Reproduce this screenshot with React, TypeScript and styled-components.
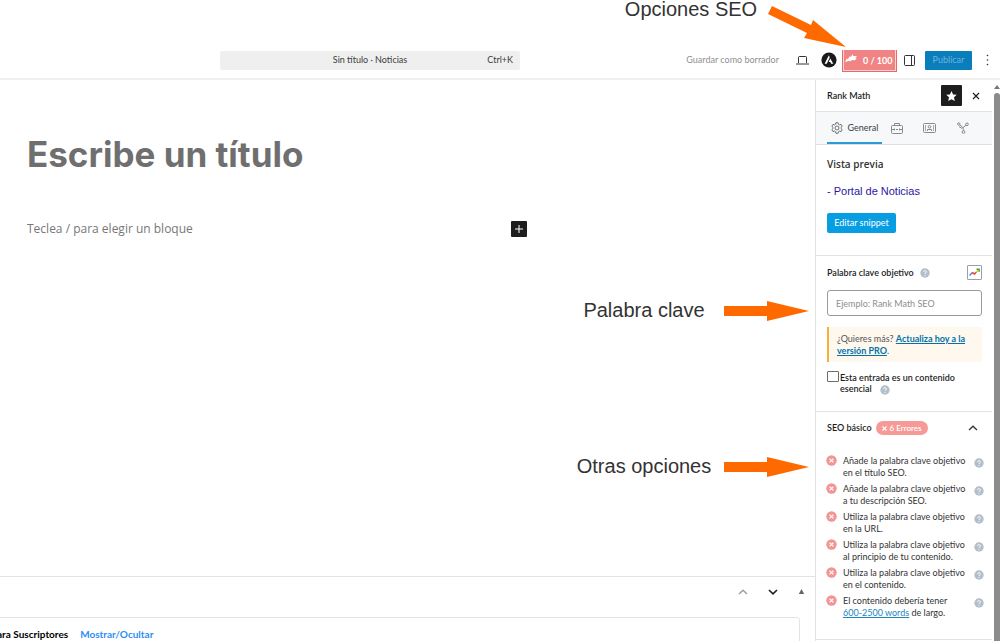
import React from "react";
import styled, { createGlobalStyle, css } from "styled-components";

const ui = `Lato, "Open Sans", sans-serif`;

const GlobalStyle = createGlobalStyle`
  *, *::before, *::after { box-sizing: border-box; }
  body { margin: 0; background: #fff; color: #1e1e1e; font: 400 9px/12px ${ui}; overflow-x: hidden; }
  button, input { font: inherit; color: inherit; margin: 0; }
  h1, h2, p, ul { margin: 0; padding: 0; font: inherit; }
  svg { display: block; flex: none; }
`;

const Page = styled.div`
  position: relative;
  display: flex;
  flex-direction: column;
  min-height: 100vh;
  overflow: hidden;
`;

/* ---------- top bar ---------- */

const TopBar = styled.header`
  display: flex;
  align-items: center;
  margin-top: 42px;
  height: 38px;
  padding-left: 22%;
  padding-right: 8px;
  border-bottom: 2px solid #f0f0f0;
`;

const CommandBar = styled.button`
  display: grid;
  grid-template-columns: 1fr auto 1fr;
  align-items: center;
  width: 300px;
  height: 19px;
  padding: 0 7px;
  border: 0;
  border-radius: 2px;
  background: #efefef;
  color: #3c3c3c;
  span:nth-child(1) { grid-column: 2; }
  span:nth-child(2) { justify-self: end; }
`;

const Actions = styled.div`
  display: flex;
  align-items: center;
  margin-left: auto;
`;

const DraftButton = styled.button`
  border: 0;
  padding: 0;
  margin-right: 17px;
  background: none;
  color: #8f8f8f;
`;

const ToolButton = styled.button<{ $gap?: number }>`
  display: flex;
  padding: 0;
  border: 0;
  margin-right: ${(p) => p.$gap ?? 0}px;
  background: none;
`;

const ScoreButton = styled.button`
  display: flex;
  align-items: center;
  gap: 6px;
  width: 55px;
  height: 22px;
  margin: 2px 7px 0 0;
  padding: 0 2px;
  border: 1px solid #e8686b;
  border-top: 0;
  background: #f08484;
  box-shadow: inset 1px -1px 0 #fbd5d5, inset -1px 0 0 #fbd5d5;
  color: #fff;
  font-weight: 700;
  svg { margin-bottom: 4px; }
`;

const PublishButton = styled.button`
  width: 47px;
  height: 19px;
  margin-right: 11px;
  padding: 0;
  border: 0;
  border-radius: 1px;
  background: #0a7dbb;
  color: #6ab5e0;
`;

/* ---------- editor ---------- */

const Body = styled.div`
  display: flex;
  flex: 1;
`;

const Main = styled.main`
  display: flex;
  flex: 1;
  flex-direction: column;
  min-width: 0;
`;

const Canvas = styled.section`
  flex: 1;
  width: 66%;
  padding: 51px 0 0 27px;
`;

const PostTitle = styled.h1`
  color: #6f6f6f;
  font: 700 35px/46px Inter, sans-serif;
`;

const BlockRow = styled.div`
  display: flex;
  align-items: center;
  justify-content: space-between;
  width: 500px;
  max-width: 100%;
  margin-top: 44px;
  color: #777;
  font: 400 12px/16px "Open Sans", sans-serif;
`;

const AddBlock = styled.button`
  display: grid;
  place-items: center;
  width: 16px;
  height: 16px;
  padding: 0;
  border: 0;
  border-radius: 1px;
  background: #1e1e1e;
`;

const MetaBoxes = styled.section`
  height: 65px;
  border-top: 1px solid #e3e3e3;
  overflow: hidden;
`;

const MetaHandles = styled.div`
  display: flex;
  align-items: center;
  justify-content: flex-end;
  gap: 20px;
  height: 29px;
  padding-right: 10px;
`;

const MetaBody = styled.div`
  display: flex;
  align-items: flex-start;
  gap: 12px;
  height: 36px;
  margin: 11px 15px 0 -4px;
  border: 1px solid #e4e4e4;
  border-radius: 0 3px 0 0;
  color: #000;
  font-size: 10px;
  font-weight: 700;
  line-height: 32px;
`;

const ToggleLink = styled.a`
  color: #2f8df5;
  text-decoration: none;
`;

/* ---------- sidebar ---------- */

const Sidebar = styled.aside`
  display: flex;
  flex-direction: column;
  flex: none;
  width: 177px;
  border-left: 1px solid #e2e2e2;
`;

const SidebarHead = styled.div`
  display: flex;
  align-items: center;
  height: 32px;
  padding: 0 12px 0 11px;
  border-bottom: 1px solid #e2e2e2;
  h2 { font-weight: 600; margin-right: auto; }
`;

const StarButton = styled.button`
  display: grid;
  place-items: center;
  width: 21px;
  height: 21px;
  margin-right: 10px;
  padding: 0;
  border: 0;
  border-radius: 1px;
  background: #1e1e1e;
`;

const Tabs = styled.nav`
  display: flex;
  height: 33px;
  padding-left: 11px;
  border-bottom: 1px solid #dcdfe3;
  background: #f7f8fa;
`;

const Tab = styled.button<{ $active?: boolean }>`
  display: flex;
  align-items: center;
  justify-content: center;
  gap: 5px;
  width: 33px;
  padding: 0;
  border: 0;
  background: none;
  color: #3a3f45;
  ${(p) =>
    p.$active &&
    css`
      width: 55px;
      margin-right: -2px;
      box-shadow: inset 0 -2px 0 #2a9bd8;
    `}
`;

const Panel = styled.section<{ $top: number; $height: number }>`
  min-height: ${(p) => p.$height}px;
  padding: ${(p) => p.$top}px 10px 0 11px;
  border-bottom: 1px solid #e2e2e2;
`;

const PreviewHeading = styled.h2`
  font: 600 10px/14px "Open Sans", sans-serif;
  color: #333;
`;

const SnippetTitle = styled.p`
  margin-top: 13px;
  color: #2a16a5;
  font: 400 11px/14px "Liberation Sans", Arial, sans-serif;
`;

const EditButton = styled.button`
  width: 69px;
  height: 20px;
  margin-top: 15px;
  padding: 0;
  border: 0;
  border-radius: 2px;
  background: #069de3;
  color: #fff;
`;

const FieldHead = styled.div`
  display: flex;
  align-items: center;
  gap: 6px;
  font-weight: 600;
  label { padding-top: 1px; }
`;

const TrendButton = styled.button`
  display: grid;
  place-items: center;
  width: 15px;
  height: 15px;
  margin-left: auto;
  padding: 0;
  border: 1px solid #9aa0a6;
  border-radius: 1px;
  background: #fff;
`;

const KeywordInput = styled.input`
  display: block;
  width: 100%;
  height: 26px;
  margin-top: 10px;
  padding: 0 8px;
  border: 1px solid #999;
  border-radius: 3px;
  &::placeholder { color: #8e8e8e; opacity: 1; }
`;

const Notice = styled.p`
  margin-top: 11px;
  padding: 6px 8px 5px;
  border-left: 2px solid #f5b13d;
  background: #fff8ef;
  color: #555;
`;

const BlueLink = styled.a<{ $strong?: boolean }>`
  color: ${(p) => (p.$strong ? "#0073aa" : "#1c86c4")};
  font-weight: ${(p) => (p.$strong ? 700 : 400)};
`;

const PillarLabel = styled.label`
  display: flex;
  align-items: flex-start;
  gap: 1px;
  margin-top: 9px;
  font-weight: 600;
  line-height: 11px;
  span { flex: 1; padding-top: 1px; }
  svg { display: inline-block; margin-left: 6px; vertical-align: -3px; }
`;

const Checkbox = styled.input`
  appearance: none;
  flex: none;
  width: 12px;
  height: 11px;
  border: 1px solid #6b6b6b;
  border-radius: 1px;
  background: #fff;
`;

const TestsHead = styled.button`
  display: flex;
  align-items: center;
  gap: 4px;
  width: 100%;
  padding: 0 4px 0 0;
  border: 0;
  background: none;
  font-weight: 600;
  > svg { margin-left: auto; }
`;

const ErrorBadge = styled.span`
  display: flex;
  align-items: center;
  justify-content: center;
  gap: 3px;
  width: 52px;
  height: 14px;
  border-radius: 7px;
  background: #f59a96;
  color: #fff;
  font-size: 8px;
`;

const TestList = styled.ul`
  display: grid;
  gap: 4px;
  margin: 20px -2px 0 -1px;
  list-style: none;
`;

const TestItem = styled.li`
  display: flex;
  color: #333;
  p { flex: 1; margin-left: 6px; }
  svg:last-child { margin-top: 3px; }
`;

const ScrollTrack = styled.div`
  display: flex;
  flex-direction: column;
  align-items: center;
  flex: none;
  width: 8px;
  padding: 5px 0 0 2px;
  gap: 4px;
`;

const ScrollThumb = styled.div`
  flex: 1;
  width: 6px;
  border-radius: 3px 3px 0 0;
  background: #8b8b8b;
`;

/* ---------- callouts drawn over the editor ---------- */

const Callout = styled.div<{ $top: number; $right: number; $gap: number }>`
  position: absolute;
  top: ${(p) => p.$top}px;
  right: ${(p) => p.$right}px;
  display: flex;
  gap: ${(p) => p.$gap}px;
  align-items: flex-end;
  color: #333;
  font: 400 20px/18px "Liberation Sans", Arial, sans-serif;
  pointer-events: none;
  span { min-width: 136px; height: 20px; text-align: center; white-space: nowrap; }
`;

const SlantedCallout = styled(Callout)`
  align-items: flex-start;
`;

const Help = () => (
  <svg width="10" height="10" viewBox="0 0 10 10" aria-label="Ayuda">
    <circle cx="5" cy="5" r="4.7" fill="#b3bfca" />
    <path d="M3.6 4c0-1.8 2.8-1.8 2.8-.1 0 1-1.4 1-1.4 2M5 7v.9" stroke="#fff" fill="none" />
  </svg>
);

const Fail = () => (
  <svg width="11" height="11" viewBox="0 0 11 11" aria-hidden>
    <circle cx="5.5" cy="5.5" r="5.2" fill="#f29592" />
    <path d="M3.6 3.6l3.8 3.8M7.4 3.6L3.6 7.4" stroke="#fff" strokeWidth="1.3" />
  </svg>
);

const Chevron = ({ up, color, width = 1.3 }: { up?: boolean; color: string; width?: number }) => (
  <svg width="10" height="6" viewBox="0 0 10 6" fill="none" stroke={color} strokeWidth={width}>
    <path d={up ? "M1 5l4-3.8L9 5" : "M1 1l4 3.8L9 1"} />
  </svg>
);

const Arrow = () => (
  <svg width="85" height="20" viewBox="0 0 85 20" aria-hidden>
    <path d="M0 5h43V0l42 10-42 10v-5H0z" fill="#ff6a00" />
  </svg>
);

const tests: React.ReactNode[] = [
  <>Añade la palabra clave objetivo<br />en el título SEO.</>,
  <>Añade la palabra clave objetivo<br />a tu descripción SEO.</>,
  <>Utiliza la palabra clave objetivo<br />en la URL.</>,
  <>Utiliza la palabra clave objetivo<br />al principio de tu contenido.</>,
  <>Utiliza la palabra clave objetivo<br />en el contenido.</>,
  <>El contenido debería tener<br /><BlueLink href="#">600-2500 words</BlueLink> de largo.</>,
];

export default function App() {
  return (
    <Page>
      <GlobalStyle />
      <TopBar>
        <CommandBar>
          <span>Sin título · Noticias</span>
          <span>Ctrl+K</span>
        </CommandBar>
        <Actions>
          <DraftButton>Guardar como borrador</DraftButton>
          <ToolButton $gap={12} aria-label="Vista">
            <svg width="13" height="9" viewBox="0 0 13 9" fill="none" stroke="#333">
              <path d="M2.5 7V1.3q0-.8.8-.8h6.4q.8 0 .8.8V7M0 8h13" />
            </svg>
          </ToolButton>
          <ToolButton $gap={5} aria-label="Astra">
            <svg width="16" height="16" viewBox="0 0 16 16">
              <circle cx="8" cy="8" r="7.6" fill="#1a1a1a" />
              <path d="M7.9 3.2L3.6 11.8h2.1l3-6.2zM9.3 6.6L7.7 9.9h1.6l.8 1.9h2.2z" fill="#fff" />
            </svg>
          </ToolButton>
          <ScoreButton>
            <svg width="12" height="9" viewBox="0 0 11 8" aria-hidden>
              <path d="M0 7.4l1.400-3.200 1.300.3 1.500-2.300 1.300.3L6.800.2l.8 1.500 3.400.1L9.600 3.200l1.200.9-1.900 1.500-2.200-.2-1.700 1.200-2-.4z" fill="#fff" />
            </svg>
            <span>0 / 100</span>
          </ScoreButton>
          <ToolButton $gap={10} aria-label="Ajustes">
            <svg width="11" height="11" viewBox="0 0 11 11" fill="none" stroke="#333">
              <rect x=".5" y=".5" width="10" height="10" rx="1" />
              <path d="M7.5 0v11" />
            </svg>
          </ToolButton>
          <PublishButton>Publicar</PublishButton>
          <ToolButton aria-label="Opciones">
            <svg width="9" height="12" viewBox="0 0 9 12" fill="#333">
              <circle cx="4.5" cy="1.5" r=".8" />
              <circle cx="4.5" cy="6" r=".8" />
              <circle cx="4.5" cy="10.5" r=".8" />
            </svg>
          </ToolButton>
        </Actions>
      </TopBar>

      <Body>
        <Main>
          <Canvas>
            <PostTitle>Escribe un título</PostTitle>
            <BlockRow>
              <p>Teclea / para elegir un bloque</p>
              <AddBlock aria-label="Añadir bloque">
                <svg width="8" height="8" viewBox="0 0 8 8" stroke="#fff">
                  <path d="M4 0v8M0 4h8" />
                </svg>
              </AddBlock>
            </BlockRow>
          </Canvas>
          <MetaBoxes>
            <MetaHandles>
              <ToolButton aria-label="Subir"><Chevron up color="#999" /></ToolButton>
              <ToolButton aria-label="Bajar"><Chevron color="#1e1e1e" width={1.6} /></ToolButton>
              <ToolButton aria-label="Alternar">
                <svg width="7" height="5" viewBox="0 0 7 5"><path d="M3.5 0L6.2 5H.8z" fill="#666" /></svg>
              </ToolButton>
            </MetaHandles>
            <MetaBody>
              <span>ara Suscriptores</span>
              <ToggleLink href="#">Mostrar/Ocultar</ToggleLink>
            </MetaBody>
          </MetaBoxes>
        </Main>

        <Sidebar>
          <SidebarHead>
            <h2>Rank Math</h2>
            <StarButton aria-label="Fijar">
              <svg width="11" height="10" viewBox="0 0 24 23" fill="#fff">
                <path d="M12 0l3.6 7.8 8.4 1-6.2 5.8L19.4 23 12 18.8 4.6 23l1.600-8.400L0 8.800l8.400-1z" />
              </svg>
            </StarButton>
            <ToolButton aria-label="Cerrar">
              <svg width="8" height="8" viewBox="0 0 8 8" stroke="#1e1e1e" strokeWidth="1.2">
                <path d="M1 1l6 6M7 1L1 7" />
              </svg>
            </ToolButton>
          </SidebarHead>
          <Tabs>
            <Tab $active>
              <svg width="12" height="12" viewBox="0 0 24 24" fill="none" stroke="#555b62" strokeWidth="1.7">
                <circle cx="12" cy="12" r="4" />
                <path d="M9.8 1.5h4.400l.8 3.200 2 1.100 3.100-.9 2.200 3.800-2.300 2.200v2.200l2.300 2.200-2.200 3.800-3.100-.9-2 1.100-.8 3.200H9.800L9 19.300l-2-1.100-3.100.9-2.200-3.800L4 13.100v-2.200L1.700 8.700l2.200-3.800 3.100.9 2-1.100z" />
              </svg>
              General
            </Tab>
            <Tab aria-label="Avanzado">
              <svg width="12" height="11" viewBox="0 0 12 11" fill="none" stroke="#858b91">
                <rect x=".5" y="2.5" width="11" height="8" rx="1" />
                <path d="M3.500 2.500v-2h5v2M.5 6.500H3M5 6.500h2M9 6.500h2.500M3.500 5.500v2M8.500 5.500v2" />
              </svg>
            </Tab>
            <Tab aria-label="Esquema">
              <svg width="13" height="10" viewBox="0 0 13 10" fill="none" stroke="#858b91">
                <rect x=".5" y=".5" width="12" height="9" rx="1" />
                <path d="M2.500 2v6M10.500 2v6" strokeWidth=".7" />
                <path d="M4.500 8V6.500h4V8" />
                <circle cx="6.5" cy="3.8" r="1.3" />
              </svg>
            </Tab>
            <Tab aria-label="Social">
              <svg width="12" height="12" viewBox="0 0 12 12" fill="none" stroke="#858b91">
                <circle cx="1.800" cy="2" r="1.200" />
                <circle cx="10" cy="2.300" r="1.300" />
                <circle cx="6.500" cy="10" r="1.400" />
                <path d="M2.800 2.800L6 5.700l3-2.500M6 5.700l.4 2.900M2 4.500L5 6.500" />
              </svg>
            </Tab>
          </Tabs>

          <Panel $top={12} $height={111}>
            <PreviewHeading>Vista previa</PreviewHeading>
            <SnippetTitle>- Portal de Noticias</SnippetTitle>
            <EditButton>Editar snippet</EditButton>
          </Panel>

          <Panel $top={9} $height={156}>
            <FieldHead>
              <label htmlFor="keyword">Palabra clave objetivo</label>
              <Help />
              <TrendButton aria-label="Tendencias">
                <svg width="11" height="9" viewBox="0 0 11 9" fill="none" strokeWidth="1.5">
                  <path d="M.5 7.5L3.500 4.500" stroke="#4285f4" />
                  <path d="M3.200 4.500l2.300 1.500L7.500 4" stroke="#ea4335" />
                  <path d="M7.200 4.300L9 2.500" stroke="#fbbc05" />
                  <path d="M7.500 1.200h2.600v2.600" stroke="#34a853" />
                </svg>
              </TrendButton>
            </FieldHead>
            <KeywordInput id="keyword" placeholder="Ejemplo: Rank Math SEO" />
            <Notice>
              ¿Quieres más? <BlueLink href="#" $strong>Actualiza hoy a la<br />versión PRO</BlueLink>.
            </Notice>
            <PillarLabel>
              <Checkbox type="checkbox" />
              <span>Esta entrada es un contenido<br />esencial <Help /></span>
            </PillarLabel>
          </Panel>

          <Panel $top={9} $height={228}>
            <TestsHead>
              SEO básico
              <ErrorBadge>
                <svg width="5" height="5" viewBox="0 0 5 5" stroke="#fff" strokeWidth="1.2">
                  <path d="M.5 .5l4 4M4.500 .5l-4 4" />
                </svg>
                6 Errores
              </ErrorBadge>
              <Chevron up color="#333" />
            </TestsHead>
            <TestList>
              {tests.map((text, i) => (
                <TestItem key={i}>
                  <Fail />
                  <p>{text}</p>
                  <Help />
                </TestItem>
              ))}
            </TestList>
          </Panel>
        </Sidebar>
        <ScrollTrack>
          <svg width="6" height="4" viewBox="0 0 6 4"><path d="M3 0l3 4H0z" fill="#777" /></svg>
          <ScrollThumb />
        </ScrollTrack>
      </Body>

      <SlantedCallout $top={0} $right={154} $gap={9}>
        <span>Opciones SEO</span>
        <svg width="78" height="47" viewBox="768 0 78 47" aria-hidden>
          <path d="M772 6l39 19 2-5 33 27-42-9 3-5-39-19z" fill="#ff6a00" />
        </svg>
      </SlantedCallout>
      <Callout $top={301} $right={191} $gap={12}>
        <span>Palabra clave</span>
        <Arrow />
      </Callout>
      <Callout $top={457} $right={191} $gap={12}>
        <span>Otras opciones</span>
        <Arrow />
      </Callout>
    </Page>
  );
}
